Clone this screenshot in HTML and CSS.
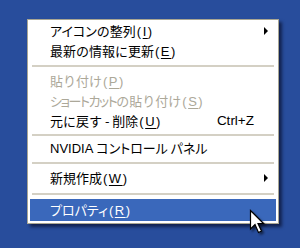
FILE: index.html
```html
<!DOCTYPE html>
<html lang="ja">
<head>
<meta charset="utf-8">
<link rel="stylesheet" href="styles.css">
</head>
<body>
<div class="menu">
  <div class="item"><span class="label"><span class="kana">アイコン</span>の整列<span class="mn">(<u>I</u>)</span></span><span class="sub"></span></div>
  <div class="item"><span class="label">最新の情報に更新<span class="mn">(<u>E</u>)</span></span></div>
  <div class="sep"></div>
  <div class="item disabled"><span class="label">貼り付け<span class="mn">(<u>P</u>)</span></span></div>
  <div class="item disabled"><span class="label"><span class="kana tight">ショートカット</span>の貼り付け<span class="mn">(<u>S</u>)</span></span></div>
  <div class="item"><span class="label">元に戻す - 削除<span class="mn">(<u>U</u>)</span></span><span class="key">Ctrl+Z</span></div>
  <div class="sep short"></div>
  <div class="item"><span class="label"><span class="latin">NVIDIA</span> <span class="kana">コントロール パネル</span></span></div>
  <div class="sep"></div>
  <div class="item"><span class="label">新規作成<span class="mn">(<u>W</u>)</span></span><span class="sub"></span></div>
  <div class="sep last"></div>
  <div class="item active"><span class="label"><span class="kana">プロパティ</span><span class="mn">(<u>R</u>)</span></span></div>
</div>
<svg class="cursor" width="16" height="26" viewBox="0 0 16 26">
  <path d="M1.5 1.5 L1.5 20 L6 15.5 L9.5 23.5 L12.5 22 L9 14.5 L14.5 14.5 Z" fill="#fff" stroke="#000" stroke-width="1.2" stroke-linejoin="miter"/>
</svg>
</body>
</html>
```
FILE: styles.css
```css
html, body {
  margin: 0;
  padding: 0;
}
body {
  width: 300px;
  height: 248px;
  background: #284d9c;
  position: relative;
  overflow: hidden;
  font-family: "Noto Sans CJK JP", "Liberation Sans", sans-serif;
  font-size: 13px;
  color: #000;
}
.menu {
  margin: 19px 0 0 27px;
  width: 250px;
  background: #fff;
  border: 1px solid #a9a693;
  padding: 1px 0 2px;
  display: flex;
  flex-direction: column;
  box-shadow: 3px 3px 3px rgba(0, 0, 20, 0.55);
}
.item {
  height: 20px;
  display: flex;
  align-items: center;
  padding-left: 20px;
  padding-right: 8px;
  margin: 0 2px;
  line-height: 1;
  white-space: nowrap;
}
.label {
  flex: 1;
}
.kana {
  font-feature-settings: "palt";
}
.kana.tight {
  letter-spacing: -1.5px;
}
.latin {
  font-family: "Liberation Sans", sans-serif;
  font-size: 13px;
}
.mn {
  font-family: "Liberation Sans", sans-serif;
  font-size: 13px;
  letter-spacing: 1.5px;
  padding-left: 1px;
}
.item u {
  text-decoration-thickness: 1px;
  text-underline-offset: 2px;
}
.disabled {
  color: #aca899;
}
.key {
  font-family: "Liberation Sans", sans-serif;
  font-size: 13.5px;
  margin-right: 14px;
}
.sub {
  width: 0;
  height: 0;
  border-top: 4px solid transparent;
  border-bottom: 4px solid transparent;
  border-left: 4px solid #000;
}
.active {
  background: #3a68bb;
  color: #fff;
  height: 22px;
}
.sep {
  height: 10px;
  display: flex;
  align-items: center;
  padding: 0 4px 0 4px;
}
.sep.short {
  height: 7px;
}
.sep.last {
  height: 11px;
}
.sep::before {
  content: "";
  flex: 1;
  height: 2px;
  background: #d4d0c4;
}
.cursor {
  position: absolute;
  left: 249px;
  top: 209px;
  filter: drop-shadow(2px 2px 1px rgba(0,0,0,0.5));
}
```
